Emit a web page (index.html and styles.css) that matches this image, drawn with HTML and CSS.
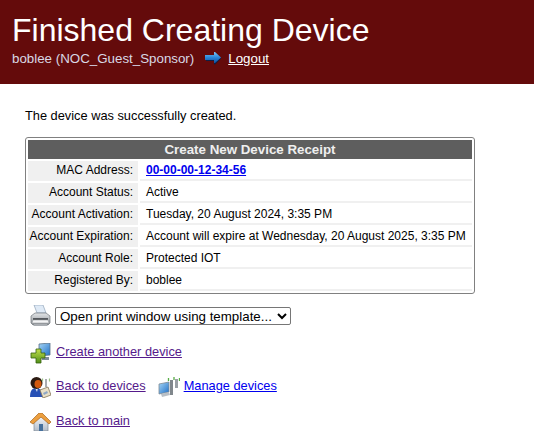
FILE: index.html
```html
<!DOCTYPE html>
<html lang="en">
<head>
  <meta charset="UTF-8" />
  <title>Finished Creating Device</title>
  <link rel="stylesheet" href="styles.css">
</head>
<body>
  <div class="header">
    <h1>Finished Creating Device</h1>
    <div class="userbar">
      <span class="username">boblee (NOC_Guest_Sponsor)</span>
      <svg class="logout-icon" width="17" height="13" viewBox="0 0 17 13">
        <defs>
          <linearGradient id="arrowFill" x1="0" y1="0" x2="0" y2="1">
            <stop offset="0" stop-color="#7cc4f4"/>
            <stop offset="0.5" stop-color="#2a86d8"/>
            <stop offset="1" stop-color="#124f9e"/>
          </linearGradient>
        </defs>
        <path d="M1 4h8V1l2 0 5 5.500-6 6h-1V9H1z" fill="#0d1f45"/>
        <path d="M0 3h9V0h1l6 5.500-6 5.500H9V8H0z" fill="url(#arrowFill)"/>
      </svg>
      <a class="logout" href="#">Logout</a>
    </div>
  </div>

  <div class="content">
    <p class="message">The device was successfully created.</p>

    <table class="receipt">
      <tr><th colspan="2">Create New Device Receipt</th></tr>
      <tr><td class="key">MAC Address:</td><td class="val"><a class="mac" href="#">00-00-00-12-34-56</a></td></tr>
      <tr><td class="key">Account Status:</td><td class="val">Active</td></tr>
      <tr><td class="key">Account Activation:</td><td class="val">Tuesday, 20 August 2024, 3:35 PM</td></tr>
      <tr><td class="key">Account Expiration:</td><td class="val">Account will expire at Wednesday, 20 August 2025, 3:35 PM</td></tr>
      <tr><td class="key">Account Role:</td><td class="val">Protected IOT</td></tr>
      <tr><td class="key">Registered By:</td><td class="val">boblee</td></tr>
    </table>

    <div class="action print-row">
      <svg class="icon" width="21" height="22" viewBox="0 0 21 22">
        <defs>
          <linearGradient id="printerBody" x1="0" y1="0" x2="0" y2="1">
            <stop offset="0" stop-color="#e2e5e8"/>
            <stop offset="1" stop-color="#8c9095"/>
          </linearGradient>
        </defs>
        <path d="M4 0h9l3 8H7z" fill="#dfeaf6" stroke="#8fa3b8" stroke-width="0.7"/>
        <path d="M1 11l4-3h11l4 3v7l-2 2H3l-2-2z" fill="url(#printerBody)" stroke="#70757b" stroke-width="0.7"/>
        <path d="M3 13h15v2H3z" fill="#55595e"/>
        <path d="M3 15h15l1 3H2z" fill="#f3f4f5" stroke="#8d9196" stroke-width="0.5"/>
        <path d="M4 19h13v2H4z" fill="#a9adb2"/>
      </svg>
      <select class="template-select">
        <option>Open print window using template...</option>
      </select>
    </div>

    <div class="action create-row">
      <svg class="icon" width="21" height="21" viewBox="0 0 21 21">
        <defs>
          <linearGradient id="screenFill" x1="0" y1="0" x2="1" y2="1">
            <stop offset="0" stop-color="#a6d6f6"/>
            <stop offset="1" stop-color="#1f6fc6"/>
          </linearGradient>
          <linearGradient id="plusFill" x1="0" y1="0" x2="0" y2="1">
            <stop offset="0" stop-color="#c2df4c"/>
            <stop offset="1" stop-color="#4f8f18"/>
          </linearGradient>
        </defs>
        <path d="M9 1l11-1v12l-11 1z" fill="url(#screenFill)" stroke="#5c7288" stroke-width="0.8"/>
        <path d="M12 14h7v3h-7z" fill="#7d8b99"/>
        <path d="M6 6h5v4h4v5h-4v5H6v-5H1v-5h5z" fill="url(#plusFill)" stroke="#35600f" stroke-width="0.8"/>
      </svg>
      <a class="visited" href="#">Create another device</a>
    </div>

    <div class="action devices-row">
      <svg class="icon" width="21" height="21" viewBox="0 0 21 21">
        <path d="M0 20c0-6 2-9 6-9s7 3 7 7v2z" fill="#2750b5"/>
        <path d="M5 11h3l-1 4z" fill="#dfe6f0"/>
        <circle cx="6.500" cy="6" r="6" fill="#2b1a12"/>
        <ellipse cx="8" cy="7" rx="3.500" ry="4" fill="#d2590f"/>
        <path d="M16 2v8" stroke="#8b9096" stroke-width="1.500"/>
        <path d="M12.500 1.500v3M19.500 1.500v3" stroke="#9cc486" stroke-width="1.200"/>
        <path d="M10 13l8-3 3 8-8 3z" fill="#e8dfc6" stroke="#85765a" stroke-width="0.8"/>
        <path d="M13 16l4-2 1 2-4 2z" fill="#8fa7c4"/>
      </svg>
      <a class="visited" href="#">Back to devices</a>
      <svg class="icon manage-icon" width="22" height="21" viewBox="0 0 22 21">
        <path d="M1 7l10-2v10L1 17z" fill="url(#screenFill)" stroke="#7d8a96" stroke-width="0.8"/>
        <path d="M3 17l8-2 1 3-8 2z" fill="#b8bfc6"/>
        <path d="M12 3h3v15h-3z" fill="#80878c"/>
        <path d="M17 2h3v9h-3z" fill="#9aa0a5"/>
        <path d="M10.500 4V1M16 3V0M21.500 4V1" stroke="#57ad45" stroke-width="1.300"/>
      </svg>
      <a href="#">Manage devices</a>
    </div>

    <div class="action main-row">
      <svg class="icon" width="21" height="18" viewBox="0 0 21 18">
        <defs>
          <linearGradient id="wallFill" x1="0" y1="0" x2="0" y2="1">
            <stop offset="0" stop-color="#f6f8fb"/>
            <stop offset="1" stop-color="#b3bdc9"/>
          </linearGradient>
        </defs>
        <path d="M4 9l7-6 7 6v9H4z" fill="url(#wallFill)" stroke="#7f8a96" stroke-width="0.7"/>
        <path d="M0 9l9-9h3l9 9-2 2-8-7-8 7z" fill="#ec9f3f" stroke="#a8641c" stroke-width="0.7"/>
        <path d="M9 11h4v7H9z" fill="#46709c"/>
      </svg>
      <a class="visited" href="#">Back to main</a>
    </div>
  </div>
</body>
</html>
```

FILE: styles.css
```css
body { margin: 0; background: #fff; color: #000; font-family: "Liberation Sans", Arial, sans-serif; font-size: 12.8px; }
a { color: #0000ee; }
a.visited { color: #551a8b; }

.header { background: #640b0b; color: #fff; height: 84px; padding-left: 12px; box-sizing: border-box; }
.header h1 { margin: 0; padding-top: 12px; font-size: 32px; font-weight: normal; line-height: 37px; }
.userbar { display: flex; align-items: center; margin-top: 1px; height: 16px; font-size: 13.33px; }
.username { color: #d8d8e4; }
.logout-icon { margin-left: 11px; margin-right: 6px; }
.logout { color: #fff; }

.content { padding-left: 25px; }
.message { margin: 0; padding-top: 25px; line-height: 14px; }

.receipt { margin-top: 14px; width: 450px; border: 1px solid #808080; border-radius: 3px; border-spacing: 2px; font-size: 12px; }
.receipt th { background: #5e5e5e; color: #efefef; font-size: 13.33px; height: 19px; padding: 0; }
.receipt td { height: 20px; padding: 0; box-sizing: border-box; }
.receipt td.key { background: #f0f0f0; text-align: right; padding: 0 5px 2px 0; width: 110px; white-space: nowrap; }
.receipt td.val { border-bottom: 2px solid #f0f0f0; padding-left: 6px; white-space: nowrap; }
.mac { font-weight: bold; }

.action { display: flex; align-items: center; margin-left: 5px; height: 22px; }
.action a { margin-bottom: 3px; }
.icon { margin-right: 5px; }
.print-row { margin-top: 11px; }
.create-row { margin-top: 15px; }
.devices-row { margin-top: 12px; }
.main-row { margin-top: 13px; }
.template-select { margin-left: -1px; font-family: "Liberation Sans", Arial, sans-serif; font-size: 13.33px; height: 18px; width: 236px; background: #fff; border: 1px solid #767676; border-radius: 2px; padding: 0; }
.icon.manage-icon { margin-left: 12px; margin-right: 4px; }
```
